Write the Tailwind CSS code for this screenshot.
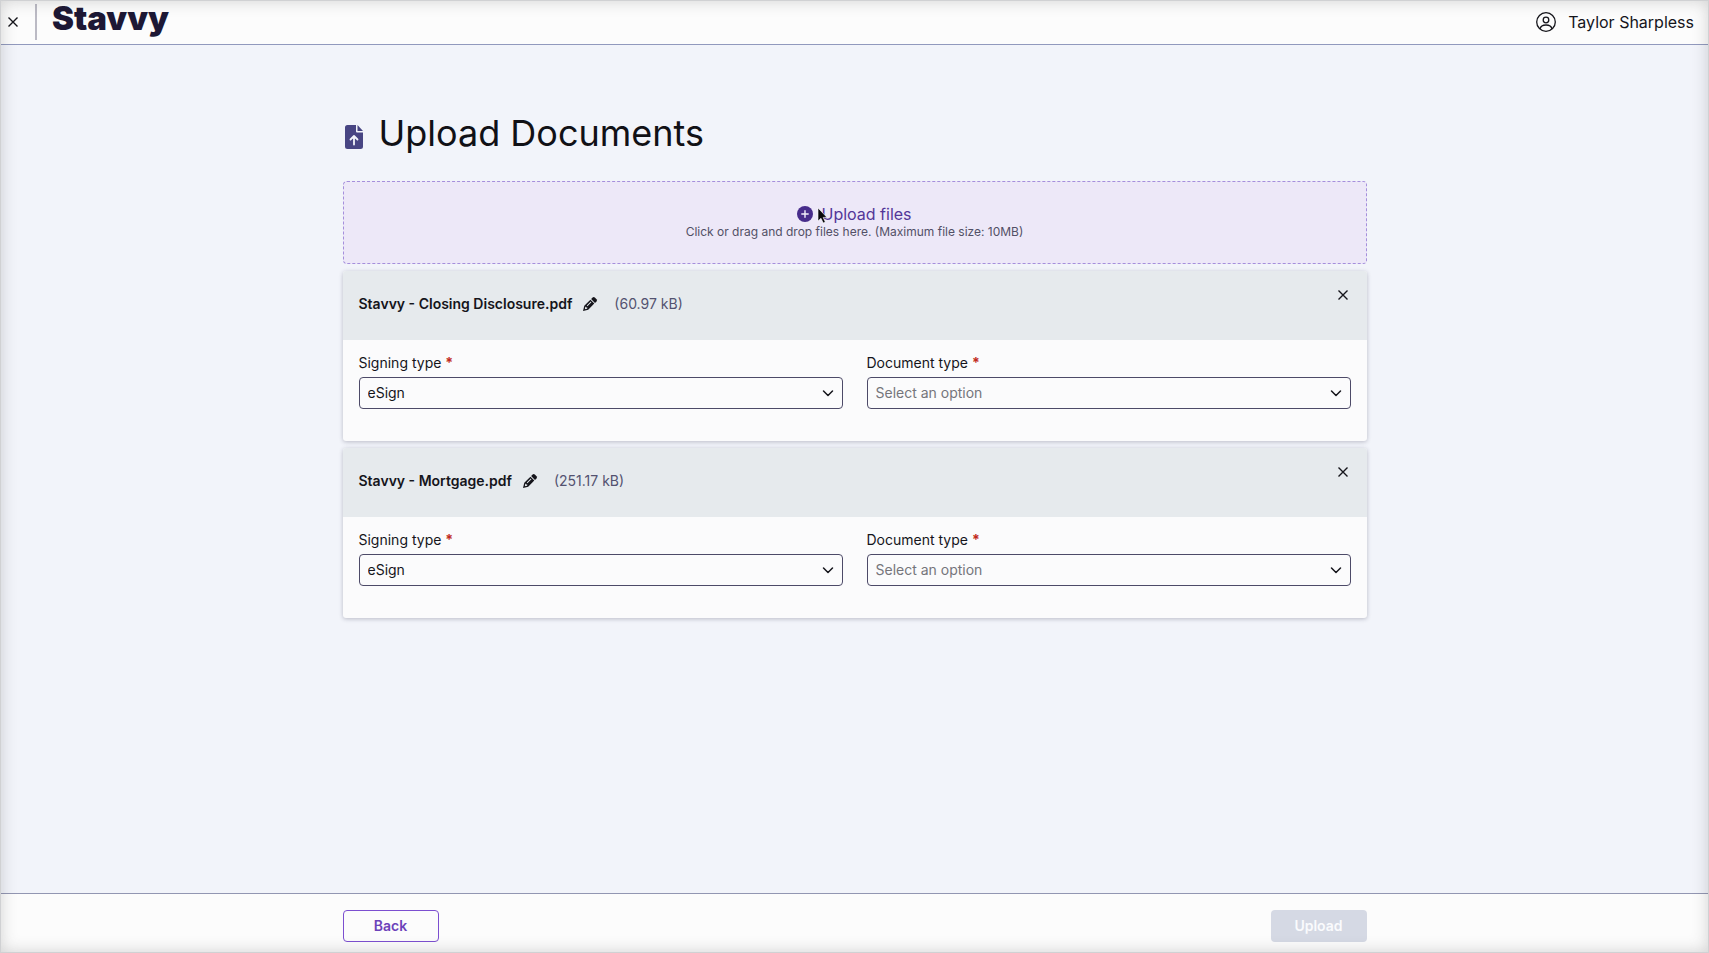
<!DOCTYPE html>
<html lang="en">
<head>
<meta charset="utf-8">
<meta name="viewport" content="width=device-width, initial-scale=1">
<title>Stavvy - Upload Documents</title>
<script src="https://cdn.jsdelivr.net/npm/@tailwindcss/browser@4"></script>
</head>
<body class="relative flex min-h-screen flex-col bg-[#f2f4fa] font-['Inter','Liberation_Sans',sans-serif] text-sm text-[#15151b]">

<svg class="hidden" aria-hidden="true">
  <symbol id="close" viewBox="0 0 12 12"><path d="M1.5 1.500l9 9M10.500 1.500l-9 9" fill="none" stroke="currentColor" stroke-width="1.400"/></symbol>
  <symbol id="chevron" viewBox="0 0 12 12"><path d="M1.500 4L6 8.500 10.500 4" fill="none" stroke="currentColor" stroke-width="1.500" stroke-linecap="round" stroke-linejoin="round"/></symbol>
  <symbol id="pencil" viewBox="0 0 16 16"><path d="M10.600 1.500a1.600 1.600 0 0 1 2.200 0l1.700 1.700a1.600 1.600 0 0 1 0 2.200L13 6.900 9.100 3z" fill="currentColor"/><path fill-rule="evenodd" d="M8.400 3.700l3.900 3.900-6.100 6.100L1 15l1.300-5.200zM3.300 10.900l-.5 2.300 2.300-.5.2-1.200-1.100-.1-.1-1zM8.800 5.600l-4 4 .6.6 4-4z" fill="currentColor"/></symbol>
</svg>

<header class="flex h-[45px] items-center border-b border-[#9199bd] bg-[#fcfcfc] pr-[15px]">
  <button type="button" aria-label="Close" class="flex h-9 w-[35px] items-center justify-center pr-[10px]"><svg class="size-3"><use href="#close"/></svg></button>
  <span class="h-9 w-0.5 bg-[#bbbac4]"></span>
  <a href="#" aria-label="Stavvy home" class="ml-4"><svg class="h-9 w-[120px] overflow-visible" viewBox="0 0 120 36"><text x="-1" y="26" font-family="Inter, sans-serif" font-weight="900" font-size="33" fill="#1d1835">Stavvy</text></svg></a>
  <button type="button" class="ml-auto flex items-center gap-3 text-base">
    <svg class="size-5" viewBox="0 0 20 20" fill="none" stroke="currentColor" stroke-width="1.300"><circle cx="10" cy="10" r="9.300"/><circle cx="10" cy="8" r="2.800"/><path d="M4 17c.5-2.600 2.400-4 6-4s5.500 1.400 6 4"/></svg>
    Taylor Sharpless
  </button>
</header>

<main class="mx-auto flex w-full max-w-[1024px] flex-1 flex-col pt-[60px]">
  <h1 class="flex h-14 items-center gap-3 text-4xl text-[#111116]">
    <svg class="mt-2 h-6 w-6" viewBox="0 0 24 24" aria-hidden="true"><path d="M4.500 0H13v6.500a1 1 0 0 0 1 1h6V21.500A2.500 2.500 0 0 1 17.500 24h-13A2.500 2.500 0 0 1 2 21.500v-19A2.500 2.500 0 0 1 4.500 0z" fill="#484583"/><path d="M14.500 0L20 6h-5.500z" fill="#484583"/><path d="M11 19.500v-8M7.500 14.500L11 11l3.500 3.500" fill="none" stroke="#f2f4fa" stroke-width="1.800" stroke-linecap="round" stroke-linejoin="round"/></svg>
    Upload Documents
  </h1>

  <button type="button" class="mt-5 flex h-[83px] flex-col items-center justify-center rounded border border-dashed border-[#a58fdc] bg-[#ede8f8] pb-px">
    <span class="relative flex items-center gap-2 text-base leading-5 text-[#533799]">
      <svg class="size-4" viewBox="0 0 16 16"><circle cx="8" cy="8" r="8" fill="#472c8b"/><path d="M8 4.800v6.400M4.800 8h6.400" stroke="#f3effb" stroke-width="1.400" stroke-linecap="round"/></svg>
      Upload files
      <svg class="absolute left-5 top-1 h-4 w-3 overflow-visible" viewBox="0 0 12 16"><path d="M1 0v13l3-2.700L6.200 15l2.100-1-2.100-4.600H10z" fill="#08080c" stroke="#fff" stroke-width=".6"/></svg>
    </span>
    <span class="text-xs leading-4 text-[#525066]">Click or drag and drop files here. (Maximum file size: 10MB)</span>
  </button>

  <section class="mt-[7px] rounded-[3px] bg-[#fbfbfc] shadow-[0_1px_4px_rgba(40,40,70,0.28)]">
    <div class="flex h-[69px] justify-between rounded-t-[3px] bg-[#e6eaed] pr-3 pl-4">
      <div class="flex items-center pb-1">
        <h2 class="font-semibold">Stavvy - Closing Disclosure.pdf</h2>
        <button type="button" aria-label="Rename file" class="ml-2.5"><svg class="size-4"><use href="#pencil"/></svg></button>
        <span class="ml-4 text-[#535270]">(60.97 kB)</span>
      </div>
      <button type="button" aria-label="Remove file" class="mt-3 size-6"><svg class="mx-auto size-3"><use href="#close"/></svg></button>
    </div>
    <div class="grid grid-cols-2 gap-6 px-4 pt-3 pb-8">
      <div>
        <label for="sign1" class="block pb-1 leading-[21px]">Signing type <span class="font-bold text-[#c12a20]">*</span></label>
        <div class="relative"><select id="sign1" class="h-8 w-full appearance-none rounded border border-[#4d4a68] px-2"><option>eSign</option></select><svg class="pointer-events-none absolute right-[9px] top-2.5 size-3"><use href="#chevron"/></svg></div>
      </div>
      <div>
        <label for="doc1" class="block pb-1 leading-[21px]">Document type <span class="font-bold text-[#c12a20]">*</span></label>
        <div class="relative"><select id="doc1" class="h-8 w-full appearance-none rounded border border-[#4d4a68] px-2 text-[#75757b]"><option>Select an option</option></select><svg class="pointer-events-none absolute right-[9px] top-2.5 size-3"><use href="#chevron"/></svg></div>
      </div>
    </div>
  </section>

  <section class="mt-[7px] rounded-[3px] bg-[#fbfbfc] shadow-[0_1px_4px_rgba(40,40,70,0.28)]">
    <div class="flex h-[69px] justify-between rounded-t-[3px] bg-[#e6eaed] pr-3 pl-4">
      <div class="flex items-center pb-1">
        <h2 class="font-semibold">Stavvy - Mortgage.pdf</h2>
        <button type="button" aria-label="Rename file" class="ml-2.5"><svg class="size-4"><use href="#pencil"/></svg></button>
        <span class="ml-4 text-[#535270]">(251.17 kB)</span>
      </div>
      <button type="button" aria-label="Remove file" class="mt-3 size-6"><svg class="mx-auto size-3"><use href="#close"/></svg></button>
    </div>
    <div class="grid grid-cols-2 gap-6 px-4 pt-3 pb-8">
      <div>
        <label for="sign2" class="block pb-1 leading-[21px]">Signing type <span class="font-bold text-[#c12a20]">*</span></label>
        <div class="relative"><select id="sign2" class="h-8 w-full appearance-none rounded border border-[#4d4a68] px-2"><option>eSign</option></select><svg class="pointer-events-none absolute right-[9px] top-2.5 size-3"><use href="#chevron"/></svg></div>
      </div>
      <div>
        <label for="doc2" class="block pb-1 leading-[21px]">Document type <span class="font-bold text-[#c12a20]">*</span></label>
        <div class="relative"><select id="doc2" class="h-8 w-full appearance-none rounded border border-[#4d4a68] px-2 text-[#75757b]"><option>Select an option</option></select><svg class="pointer-events-none absolute right-[9px] top-2.5 size-3"><use href="#chevron"/></svg></div>
      </div>
    </div>
  </section>
</main>

<footer class="border-t border-[#9296b2] bg-[#fcfcfc]">
  <div class="mx-auto flex max-w-[1024px] justify-between pt-4 pb-[11px] font-semibold">
    <button type="button" class="h-8 w-24 rounded border border-[#7c4fd0] text-[#6c42ba]">Back</button>
    <button type="button" disabled class="h-8 w-24 rounded bg-[#d5d9e4] text-[#fafbfd]">Upload</button>
  </div>
</footer>

<div class="pointer-events-none absolute inset-0 border border-[#d0d1d3] shadow-[inset_0_0_16px_rgba(60,60,60,0.22)]"></div>
</body>
</html>
